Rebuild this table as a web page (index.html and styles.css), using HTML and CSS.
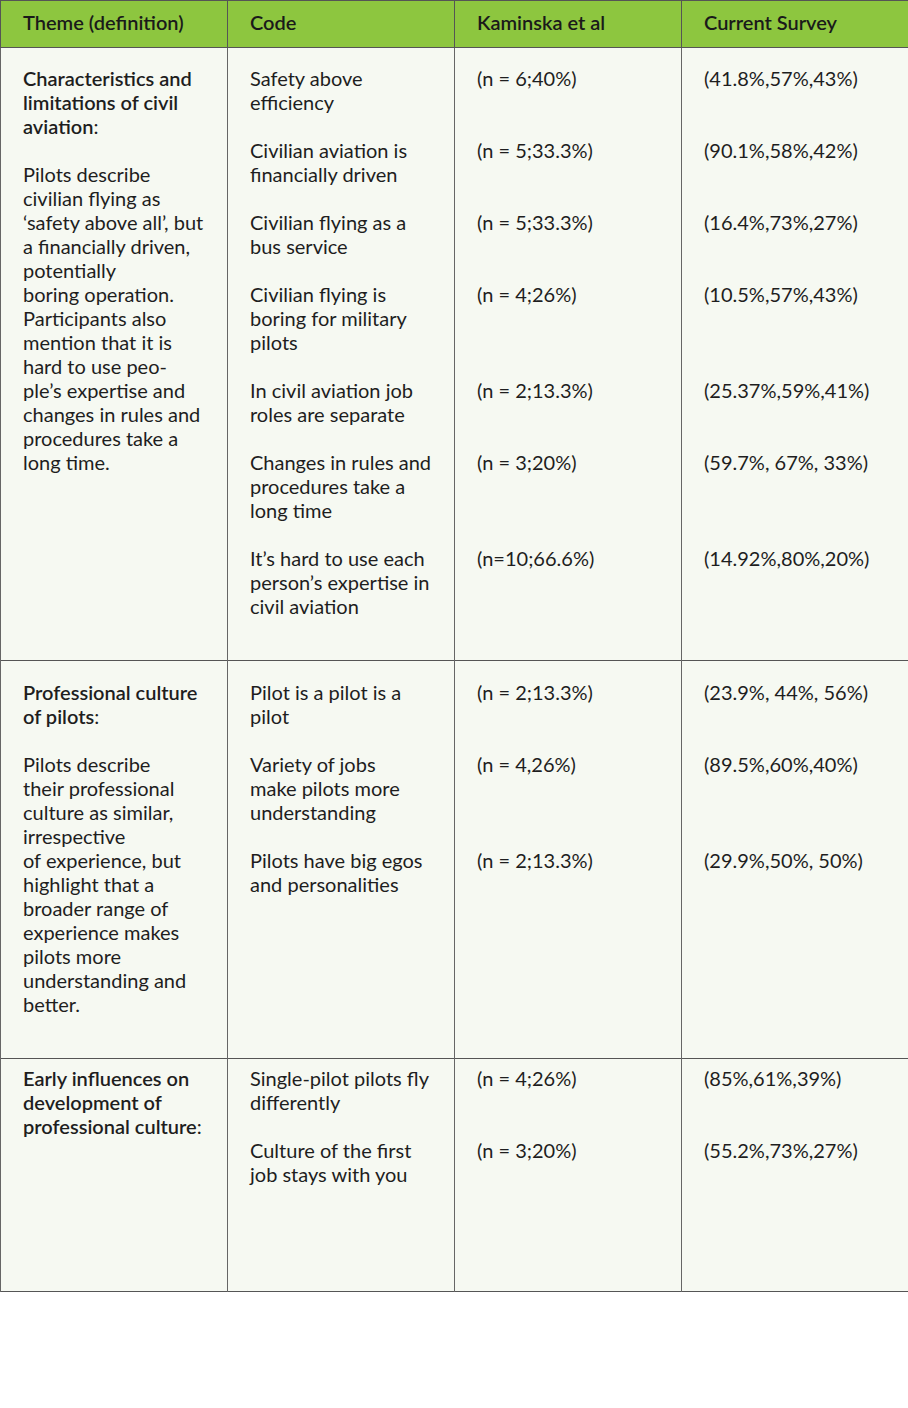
FILE: index.html
```html
<!DOCTYPE html>
<html lang="en">
<head>
  <meta charset="UTF-8">
  <title>Themes and codes</title>
  <link rel="stylesheet" href="styles.css">
</head>
<body>

  <table class="themes">
    <colgroup>
      <col class="col"><col class="col"><col class="col"><col class="col">
    </colgroup>
    <thead>
      <tr>
        <th>Theme (definition)</th>
        <th>Code</th>
        <th>Kaminska et al</th>
        <th>Current Survey</th>
      </tr>
    </thead>

    <!-- Group 1 -->
    <tbody class="group g1">
      <tr>
        <td class="theme" rowspan="7">
          <p><strong>Characteristics and<br>limitations of civil<br>aviation</strong>:</p>
          <p>Pilots describe<br>civilian flying as<br>‘safety above all’, but<br>a financially driven,<br>potentially<br>boring operation.<br>Participants also<br>mention that it is<br>hard to use peo-<br>ple’s expertise and<br>changes in rules and<br>procedures take a<br>long time.</p>
        </td>
        <td>Safety above<br>efficiency</td>
        <td>(n = 6;40%)</td>
        <td>(41.8%,57%,43%)</td>
      </tr>
      <tr>
        <td>Civilian aviation is<br>financially driven</td>
        <td>(n = 5;33.3%)</td>
        <td>(90.1%,58%,42%)</td>
      </tr>
      <tr>
        <td>Civilian flying as a<br>bus service</td>
        <td>(n = 5;33.3%)</td>
        <td>(16.4%,73%,27%)</td>
      </tr>
      <tr>
        <td>Civilian flying is<br>boring for military<br>pilots</td>
        <td>(n = 4;26%)</td>
        <td>(10.5%,57%,43%)</td>
      </tr>
      <tr>
        <td>In civil aviation job<br>roles are separate</td>
        <td>(n = 2;13.3%)</td>
        <td>(25.37%,59%,41%)</td>
      </tr>
      <tr>
        <td>Changes in rules and<br>procedures take a<br>long time</td>
        <td>(n = 3;20%)</td>
        <td>(59.7%, 67%, 33%)</td>
      </tr>
      <tr class="last">
        <td>It’s hard to use each<br>person’s expertise in<br>civil aviation</td>
        <td>(n=10;66.6%)</td>
        <td>(14.92%,80%,20%)</td>
      </tr>
    </tbody>

    <!-- Group 2 -->
    <tbody class="group g2">
      <tr>
        <td class="theme" rowspan="3">
          <p><strong>Professional culture<br>of pilots</strong>:</p>
          <p>Pilots describe<br>their professional<br>culture as similar,<br>irrespective<br>of experience, but<br>highlight that a<br>broader range of<br>experience makes<br>pilots more<br>understanding and<br>better.</p>
        </td>
        <td>Pilot is a pilot is a<br>pilot</td>
        <td>(n = 2;13.3%)</td>
        <td>(23.9%, 44%, 56%)</td>
      </tr>
      <tr>
        <td>Variety of jobs<br>make pilots more<br>understanding</td>
        <td>(n = 4,26%)</td>
        <td>(89.5%,60%,40%)</td>
      </tr>
      <tr class="last">
        <td>Pilots have big egos<br>and personalities</td>
        <td>(n = 2;13.3%)</td>
        <td>(29.9%,50%, 50%)</td>
      </tr>
    </tbody>

    <!-- Group 3 -->
    <tbody class="group g3">
      <tr>
        <td class="theme" rowspan="2">
          <p><strong>Early influences on<br>development of<br>professional culture</strong>:</p>
        </td>
        <td>Single-pilot pilots fly<br>differently</td>
        <td>(n = 4;26%)</td>
        <td>(85%,61%,39%)</td>
      </tr>
      <tr class="last">
        <td>Culture of the first<br>job stays with you</td>
        <td>(n = 3;20%)</td>
        <td>(55.2%,73%,27%)</td>
      </tr>
    </tbody>
  </table>

</body>
</html>
```

FILE: styles.css
```css
body {
  margin: 0;
  background: #fff;
  font-family: Lato, "Open Sans", sans-serif;
  font-size: 20px;
  line-height: 24px;
  color: #1e1e1e;
}
.themes {
  width: 908px;
  table-layout: fixed;
  border-collapse: collapse;
  border: 1px solid #555;
  background: #f6f9f2;
}
.col {
  width: 227px;
}
th {
  background: #8dc63f;
  color: #1a1a1a;
  font-weight: 600;
  text-align: left;
  padding: 9px 22px 13px;
  border: 1px solid #555;
}
td {
  vertical-align: top;
  text-align: left;
  padding: 0 22px 24px;
  border-left: 1px solid #666;
  border-right: 1px solid #666;
}
.group {
  border-top: 1px solid #555;
}
.theme p {
  margin: 0 0 24px;
}
.theme strong {
  font-weight: 600;
}
.g1 tr:first-child td { padding-top: 18px; }
.g2 tr:first-child td { padding-top: 19px; }
.g3 tr:first-child td { padding-top: 7px; }
.g1 .last td { padding-bottom: 42px; }
.g2 .last td { padding-bottom: 162px; }
.g3 .last td { padding-bottom: 105px; }
.theme { padding-bottom: 0; }
```
